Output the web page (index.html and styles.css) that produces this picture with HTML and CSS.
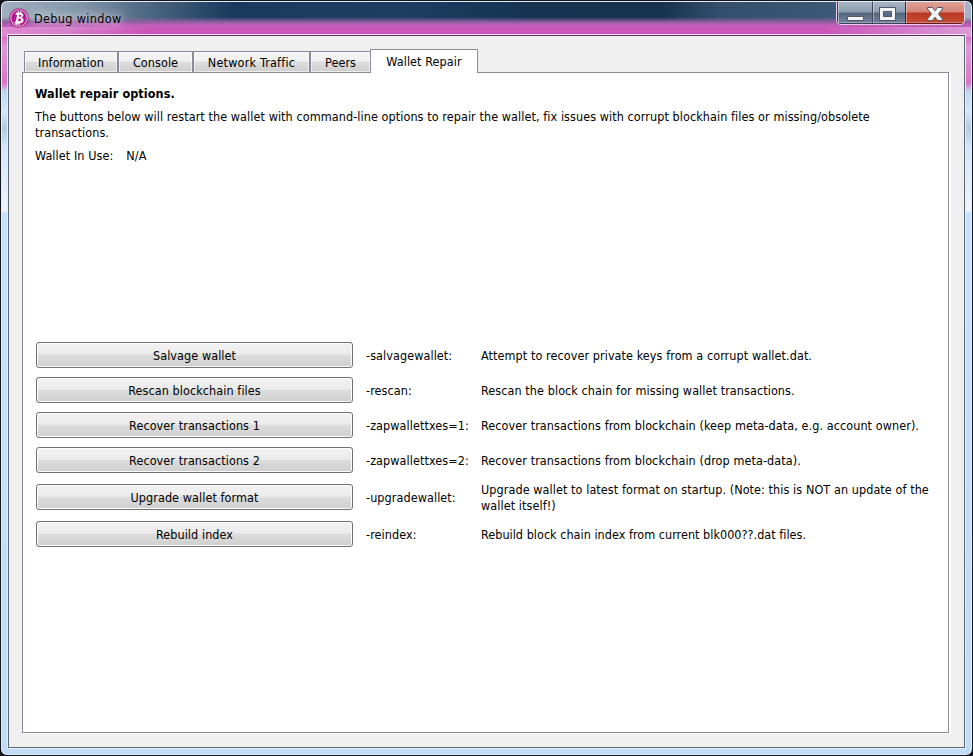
FILE: index.html
```html
<!DOCTYPE html>
<html lang="en">
<head>
<meta charset="utf-8">
<title>Debug window</title>
<link rel="stylesheet" href="styles.css">
</head>
<body>
<div class="window">
  <header class="titlebar">
    <svg class="logo" viewBox="0 0 20 20"><circle cx="10" cy="10" r="9.8" fill="#a51884"/><circle cx="10" cy="10" r="8.2" fill="none" stroke="#edb9df" stroke-width="1.1"/><circle cx="10" cy="10" r="7.200" fill="#b51b91"/><path d="M6.900 4.800h4.100c4.200 0 4.200 4 1.200 4.800 3.700.7 3 5.800-1.500 5.800H5.400l.4-1.900h1.100l1.200-6.800H6.600zM10.200 6.700l-.4 2.100h1c1.900 0 2.100-2.100.3-2.100zm-.7 3.700-.5 2.900h1.300c2.200 0 2.500-2.900.4-2.900z" fill="#fff" fill-rule="evenodd"/><path d="M9.600 3.200 9.200 5.200M12 3.400l-.4 2M7.700 15l-.4 2M10.100 15l-.4 2" stroke="#fff" stroke-width="1.300"/></svg>
    <h1 class="title">Debug window</h1>
    <div class="caption-buttons">
      <button class="cap min" aria-label="Minimize"><svg width="34" height="23" viewBox="0 0 34 23"><rect x="9.500" y="14.500" width="16" height="4" rx=".5" fill="#f5f5f5" stroke="#515565"/></svg></button>
      <button class="cap max" aria-label="Maximize"><svg width="32" height="23" viewBox="0 0 32 23"><path d="M6.500 5.500h16v13h-16zM10.500 9.500v5h8v-5z" fill="#f3f3f3" fill-rule="evenodd" stroke="#515565"/></svg></button>
      <button class="cap close" aria-label="Close"><svg width="58" height="23" viewBox="0 0 58 23"><path d="M21.500 5.500h5l2.500 3.300 2.500-3.300h5v1.500l-4 5 4 5v1.500h-5l-2.500-3.300-2.500 3.300h-5v-1.500l4-5-4-5z" fill="#f3f3f3" stroke="#515565"/></svg></button>
    </div>
  </header>
  <main class="client">
    <nav class="tabs">
      <button class="tab info"><span>Information</span></button>
      <button class="tab console"><span>Console</span></button>
      <button class="tab network"><span>Network Traffic</span></button>
      <button class="tab peers"><span>Peers</span></button>
      <button class="tab active"><span>Wallet Repair</span></button>
    </nav>
    <section class="panel">
      <h2 class="heading">Wallet repair options.</h2>
      <p class="intro">The buttons below will restart the wallet with command-line options to repair the wallet, fix issues with corrupt blockhain files or missing/obsolete<br>transactions.</p>
      <p class="in-use"><span>Wallet In Use:</span><span>N/A</span></p>
      <div class="options">
        <button class="action">Salvage wallet</button><span>-salvagewallet:</span><span>Attempt to recover private keys from a corrupt wallet.dat.</span>
        <button class="action">Rescan blockchain files</button><span>-rescan:</span><span>Rescan the block chain for missing wallet transactions.</span>
        <button class="action">Recover transactions 1</button><span>-zapwallettxes=1:</span><span>Recover transactions from blockchain (keep meta-data, e.g. account owner).</span>
        <button class="action">Recover transactions 2</button><span>-zapwallettxes=2:</span><span>Recover transactions from blockchain (drop meta-data).</span>
        <button class="action">Upgrade wallet format</button><span>-upgradewallet:</span><span>Upgrade wallet to latest format on startup. (Note: this is NOT an update of the<br>wallet itself!)</span>
        <button class="action">Rebuild index</button><span>-reindex:</span><span class="tight">Rebuild block chain index from current blk000??.dat files.</span>
      </div>
    </section>
  </main>
</div>
</body>
</html>
```
FILE: styles.css
```css
* { box-sizing: border-box; }
body { margin: 0; background: #15151c; font: 12.5px/16px "DejaVu Sans Condensed", "DejaVu Sans", sans-serif; font-stretch: condensed; letter-spacing: .08px; color: #000; }
button { font: inherit; letter-spacing: inherit; color: inherit; margin: 0; padding: 0; }
h1, h2, p { margin: 0; }
.window {
  width: 973px; height: 756px; padding: 0 7px 7px 7px;
  border: 1px solid #15151c; border-radius: 7px;
  box-shadow: inset 0 0 0 1px #e2edf8;
  background:
    linear-gradient(90deg, #e3a5dcb0 0, #e3a5dc80 60px, transparent 150px, transparent 820px, #dc9ad8 100%) 0 26px / 100% 10px no-repeat,
    linear-gradient(180deg, transparent 0 16px, #8f5ea0 21px, #c060bb 24px, #d14fb9 32px, #cd4ab4 36px) 0 0 / 100% 36px no-repeat,
    linear-gradient(90deg, #a0b0c0 0, #8295a8 80px, #516b86 140px, #1a3a5c 230px, #1f3d60 400px, #163452 520px, #16324f 660px, #334f6d 720px, #3c5877 830px, #a4b4c6 965px) 0 0 / 100% 27px no-repeat,
    linear-gradient(180deg, #d151ba 0 30px, #dc9ad8 46px, #db73c5 82px, #c0d5ec 90px, #d4e6f8 110px, #b6cadd 128px, #d4e6f8 145px, #eef4fb 210px, #c7e0fb 212px, #c3dcf6 100%);
  display: flex; flex-direction: column;
}
.titlebar { flex: none; height: 33px; display: flex; align-items: flex-start; }
.logo { width: 20px; height: 20px; margin: 7px 0 0 1px; }
.title { font-size: 12.5px; line-height: 16px; font-weight: normal; letter-spacing: .35px; margin: 10px 0 0 5px; white-space: nowrap; text-shadow: 0 0 7px #fffb, 0 0 12px #fffa, 0 0 16px #fff8; }
.caption-buttons { margin: 0 0 0 auto; height: 24px; width: 129px; display: flex; border: 1px solid #e8cfe7; border-top: 0; border-radius: 0 0 5px 5px; overflow: hidden; }
.cap { height: 23px; border: 1px solid #3e4455; border-top-color: #e2edf8; border-right: 0; display: block; background: linear-gradient(#a8b5c5 0, #8d9dae 10px, #53677f 11px, #71839a 100%); box-shadow: inset 1px 0 #ffffff66, inset 0 -1px #ffffff44; }
.cap svg { display: block; }
.min { width: 35px; }
.max { width: 33px; }
.close { width: 59px; border-color: #5d1d20; border-top-color: #e2edf8; background: linear-gradient(#dfa397 0, #d38374 10px, #b93824 11px, #c94d32 100%); }
.client { flex: 1; border: 1px solid #5b6674; border-top-color: #6b2a60; outline: 1px solid #e9eff7; background: #efefef; padding: 13px 15px 14px 13px; display: flex; flex-direction: column; margin-top: 1px; }
.tabs { flex: none; height: 24px; display: flex; align-items: flex-end; padding-left: 2px; margin-bottom: -1px; z-index: 1; }
.tab { height: 22px; border: 1px solid #898c95; box-shadow: inset 0 0 0 1px #fff9; background: linear-gradient(#f2f2f2 0 45%, #dddddd 50%, #cfcfcf); white-space: nowrap; }
.tab span { position: relative; top: 1px; }
.info { width: 94px; }
.console { width: 75px; }
.network { width: 117px; letter-spacing: .2px; }
.peers { width: 60px; border-right: 0; }
.tab.active { width: 108px; height: 24px; background: #fff; border-bottom: 0; box-shadow: none; }
.tab.active span { top: 0; }
.panel { flex: 1; border: 1px solid #898c95; box-shadow: 1px 1px #fff, 2px 1px #fff; background: #fff; padding: 13px 12px 0; }
.heading { font-size: 12.5px; line-height: 16px; font-weight: bold; height: 16px; }
.intro { margin-top: 7px; white-space: nowrap; }
.in-use { margin-top: 7px; display: flex; gap: 13px; }
.options { margin: 178px 0 0 1px; display: grid; grid-template-columns: 317px 102px auto; grid-template-rows: 26px 26px 26px 26px 30px 26px; gap: 9px 13px; align-items: center; white-space: nowrap; }
.options span { padding-top: 1px; }
.options .tight { letter-spacing: .03px; }
.action { width: 317px; height: 26px; padding-top: 1px; border: 1px solid #707070; border-radius: 3px; box-shadow: inset 0 0 0 1px #fcfcfc; background: linear-gradient(#f2f2f2 0, #ebebeb 47%, #dddddd 50%, #cfcfcf); }
```
